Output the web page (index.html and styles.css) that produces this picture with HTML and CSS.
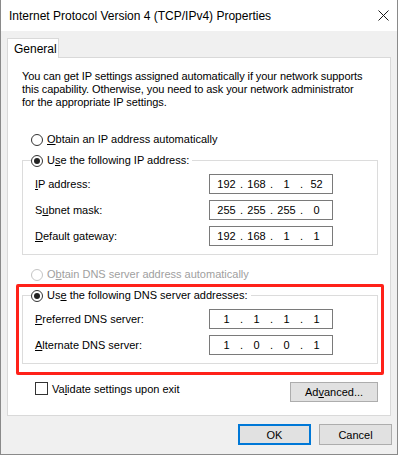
FILE: index.html
```html
<!DOCTYPE html>
<html lang="en">
<head>
    <meta charset="UTF-8">
    <meta name="viewport" content="width=device-width, initial-scale=1.0">
    <title>Internet Protocol Version 4 (TCP/IPv4) Properties</title>
    <link rel="stylesheet" href="styles.css">
</head>
<body>
    <div class="window">
        <div class="titlebar">
            <span class="title">Internet Protocol Version 4 (TCP/IPv4) Properties</span>
            <svg class="close" width="11" height="11" viewBox="0 0 11 11">
                <path d="M0.5 0.5 L10.5 10.5 M10.5 0.5 L0.5 10.5" stroke="#1a1a1a" stroke-width="1" fill="none"/>
            </svg>
        </div>

        <div class="tabs">
            <div class="tab">General</div>
        </div>

        <div class="panel">
            <p class="intro">You can get IP settings assigned automatically if your network supports<br>this capability. Otherwise, you need to ask your network administrator<br>for the appropriate IP settings.</p>

            <label class="option first">
                <span class="radio"></span>
                <span><u>O</u>btain an IP address automatically</span>
            </label>

            <fieldset class="group">
                <legend class="option">
                    <span class="radio checked"></span>
                    <span>U<u>s</u>e the following IP address:</span>
                </legend>
                <div class="row">
                    <span class="label"><u>I</u>P address:</span>
                    <div class="ip">
                        <span class="octet">192</span><span class="dot">.</span><span class="octet">168</span><span class="dot">.</span><span class="octet">1</span><span class="dot">.</span><span class="octet">52</span>
                    </div>
                </div>
                <div class="row">
                    <span class="label">S<u>u</u>bnet mask:</span>
                    <div class="ip">
                        <span class="octet">255</span><span class="dot">.</span><span class="octet">255</span><span class="dot">.</span><span class="octet">255</span><span class="dot">.</span><span class="octet">0</span>
                    </div>
                </div>
                <div class="row">
                    <span class="label"><u>D</u>efault gateway:</span>
                    <div class="ip">
                        <span class="octet">192</span><span class="dot">.</span><span class="octet">168</span><span class="dot">.</span><span class="octet">1</span><span class="dot">.</span><span class="octet">1</span>
                    </div>
                </div>
            </fieldset>

            <label class="option disabled dns-auto">
                <span class="radio"></span>
                <span>O<u>b</u>tain DNS server address automatically</span>
            </label>

            <div class="highlight">
                <fieldset class="group">
                    <legend class="option">
                        <span class="radio checked"></span>
                        <span>Us<u>e</u> the following DNS server addresses:</span>
                    </legend>
                    <div class="row">
                        <span class="label"><u>P</u>referred DNS server:</span>
                        <div class="ip">
                            <span class="octet">1</span><span class="dot">.</span><span class="octet">1</span><span class="dot">.</span><span class="octet">1</span><span class="dot">.</span><span class="octet">1</span>
                        </div>
                    </div>
                    <div class="row">
                        <span class="label"><u>A</u>lternate DNS server:</span>
                        <div class="ip">
                            <span class="octet">1</span><span class="dot">.</span><span class="octet">0</span><span class="dot">.</span><span class="octet">0</span><span class="dot">.</span><span class="octet">1</span>
                        </div>
                    </div>
                </fieldset>
            </div>

            <div class="bottom-row">
                <label class="check">
                    <span class="checkbox"></span>
                    <span>Va<u>l</u>idate settings upon exit</span>
                </label>
                <button class="btn advanced">Ad<u>v</u>anced...</button>
            </div>
        </div>

        <div class="actions">
            <button class="btn default">OK</button>
            <button class="btn">Cancel</button>
        </div>
    </div>
</body>
</html>
```

FILE: styles.css
```css
body {
    margin: 0;
    background: #ffffff;
    font-family: "Liberation Sans", Arial, sans-serif;
    font-size: 11px;
    color: #000;
}
.window {
    width: 398px;
    height: 455px;
    box-sizing: border-box;
    background: #f0f0f0;
    border: 1px solid #8a8a8a;
    border-top: none;
}
.titlebar {
    height: 31px;
    background: #fff;
    display: flex;
    align-items: center;
    justify-content: space-between;
    padding: 0 8px 0 8px;
}
.title {
    font-size: 12px;
}
.close {
    display: block;
}
.tabs {
    display: flex;
    padding: 7px 0 0 6px;
}
.tab {
    position: relative;
    z-index: 1;
    width: 52px;
    height: 20px;
    box-sizing: border-box;
    margin-bottom: -1px;
    border: 1px solid #d9d9d9;
    border-bottom: none;
    background: #fff;
    padding: 3px 0 0 6px;
    font-size: 12px;
    line-height: 14px;
}
.panel {
    margin-left: 6px;
    width: 384px;
    height: 359px;
    box-sizing: border-box;
    background: #fff;
    border: 1px solid #d9d9d9;
    padding: 12px 12px 0 14px;
}
.intro {
    margin: 0;
    line-height: 13px;
    letter-spacing: -0.08px;
    white-space: nowrap;
}
u {
    text-decoration-thickness: 1px;
    text-underline-offset: 1px;
}
.option {
    display: flex;
    align-items: center;
    gap: 4px;
    height: 13px;
    line-height: 13px;
    padding-left: 9px;
    white-space: nowrap;
}
.option.first {
    margin-top: 24px;
}
.radio {
    width: 12px;
    height: 12px;
    box-sizing: border-box;
    border: 1px solid #333;
    border-radius: 50%;
    background: #fff;
    display: flex;
    align-items: center;
    justify-content: center;
}
.radio.checked::after {
    content: "";
    width: 6px;
    height: 6px;
    border-radius: 50%;
    background: #222;
}
.disabled {
    color: #a0a0a0;
}
.disabled .radio {
    border-color: #c4c4c4;
}
.group {
    margin: 8px 0 0 0;
    padding: 7px 0 8px 0;
    border: 1px solid #dcdcdc;
    display: flex;
    flex-direction: column;
    gap: 6px;
}
.group legend.option {
    padding: 0 3px 0 0;
    margin-left: 8px;
}
.row {
    display: flex;
    align-items: center;
    justify-content: space-between;
    padding: 0 44px 0 12px;
}
.ip {
    width: 124px;
    height: 20px;
    box-sizing: border-box;
    border: 1px solid #7a7a7a;
    background: #fff;
    display: flex;
    align-items: center;
    padding-left: 5px;
}
.octet {
    width: 23px;
    text-align: center;
}
.dot {
    width: 7px;
    text-align: center;
}
.dns-auto {
    margin-top: 13px;
}
.highlight {
    margin: 3px 0 0 -6px;
    width: 368px;
    box-sizing: border-box;
    border: 3px solid #ff2119;
    border-radius: 2px;
    padding: 2px 3px 8px 3px;
}
.highlight .group {
    margin-top: 0;
}
.bottom-row {
    display: flex;
    justify-content: space-between;
    align-items: flex-start;
    margin-top: 7px;
}
.check {
    display: flex;
    align-items: center;
    gap: 4px;
    padding-left: 13px;
    height: 13px;
}
.checkbox {
    width: 13px;
    height: 13px;
    box-sizing: border-box;
    border: 1px solid #333;
    background: #fff;
}
.btn {
    font-family: inherit;
    font-size: 11px;
    color: #000;
    background: #e1e1e1;
    border: 1px solid #adadad;
    padding: 0;
    height: 21px;
    width: 73px;
}
.btn.advanced {
    width: 88px;
    height: 20px;
}
.btn.default {
    border: 2px solid #0078d7;
}
.actions {
    display: flex;
    justify-content: flex-end;
    gap: 8px;
    padding: 8px 5px 0 0;
}
```
